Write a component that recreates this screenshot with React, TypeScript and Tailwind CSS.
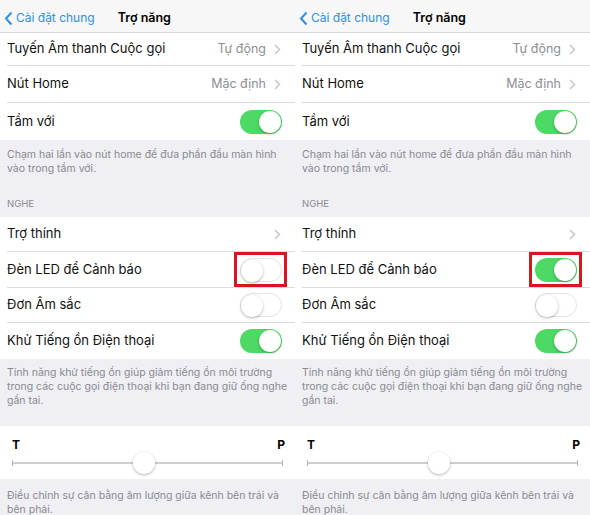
const font = { fontFamily: 'Inter, "Noto Sans", sans-serif' };

const Chevron = ({ className = "" }: { className?: string }) => (
  <svg width="7" height="11" viewBox="0 0 7 11" className={className}>
    <path d="M1 1l4.5 4.5L1 10" fill="none" stroke="#c7c7cc" strokeWidth="1.5" />
  </svg>
);

const Toggle = ({ on }: { on: boolean }) => (
  <div
    className={`relative w-[42px] h-[24px] rounded-full ${
      on ? "bg-[#4cd964]" : "bg-white border border-[#e3e3e6]"
    }`}
  >
    <div
      className={`absolute top-[1px] w-[22px] h-[22px] rounded-full bg-white shadow-[0_1px_3px_rgba(0,0,0,0.3)] ${
        on ? "right-[1px]" : "left-0 top-0"
      }`}
    />
  </div>
);

const Row = ({
  label,
  value,
  chevron,
  toggle,
  boxed,
  last,
  h = "h-[36px]",
}: {
  label: string;
  value?: string;
  chevron?: boolean;
  toggle?: boolean | undefined;
  boxed?: boolean;
  last?: boolean;
  h?: string;
}) => (
  <div className={`flex items-center pl-[7px] ${h}`}>
    <div
      className={`flex flex-1 items-center h-full pr-[14px] ${
        last ? "" : "border-b border-[#dcdce0]"
      }`}
    >
      <span className="flex-1 text-[13px] text-[#111]">{label}</span>
      {value && <span className="text-[12.5px] text-[#8e8e93] mr-[8px]">{value}</span>}
      {chevron && <Chevron />}
      {toggle !== undefined && (
        <div
          className={`flex items-center justify-center w-[53px] h-[35px] -mr-[6px] ${
            boxed ? "border-[3px] border-[#d9161f]" : ""
          }`}
        >
          <Toggle on={toggle} />
        </div>
      )}
    </div>
  </div>
);

const Note = ({ children, className = "" }: { children: React.ReactNode; className?: string }) => (
  <p className={`px-[7px] text-[10.5px] leading-[14px] text-[#8a8a8f] whitespace-nowrap ${className}`}>
    {children}
  </p>
);

const Panel = ({ led }: { led: boolean }) => (
  <div className="w-[295px] shrink-0 bg-[#efeff4]" style={font}>
    {/* nav */}
    <div className="h-[33px] flex items-center bg-[#f7f7f7] border-b border-[#d8d8dc] px-[4px] pt-[4px]">
      <svg width="9" height="15" viewBox="0 0 9 15" className="mr-[3px]">
        <path d="M7.5 1.5L2 7.5l5.5 6" fill="none" stroke="#2e8ee8" strokeWidth="2" />
      </svg>
      <span className="text-[12px] text-[#2e8ee8]">Cài đặt chung</span>
      <span className="ml-[23px] text-[12.5px] font-semibold text-black">Trợ năng</span>
    </div>

    <div className="bg-white">
      <Row label="Tuyến Âm thanh Cuộc gọi" value="Tự động" chevron h="h-[33px]" />
      <Row label="Nút Home" value="Mặc định" chevron h="h-[37px]" />
      <Row label="Tầm với" toggle={true} last h="h-[37px]" />
    </div>

    <Note className="pt-[8px]">
      Chạm hai lần vào nút home để đưa phần đầu màn hình
      <br />
      vào trong tầm với.
    </Note>
    <p className="px-[7px] pt-[21px] pb-[6px] text-[9.5px] leading-[14px] text-[#8a8a8f]">NGHE</p>

    <div className="bg-white">
      <Row label="Trợ thính" chevron h="h-[35px]" />
      <Row label="Đèn LED để Cảnh báo" toggle={led} boxed h="h-[36px]" />
      <Row label="Đơn Âm sắc" toggle={false} h="h-[35px]" />
      <Row label="Khử Tiếng ồn Điện thoại" toggle={true} last h="h-[36px]" />
    </div>

    <Note className="pt-[7px] pb-[18px]">
      Tính năng khử tiếng ồn giúp giảm tiếng ồn môi trường
      <br />
      trong các cuộc gọi điện thoại khi bạn đang giữ ống nghe
      <br />
      gần tai.
    </Note>

    <div className="bg-white h-[53px] px-[12px] pt-[12px]">
      <div className="flex justify-between text-[12px] font-bold text-black leading-[14px]">
        <span>T</span>
        <span className="-mr-[2px]">P</span>
      </div>
      <div className="relative h-[22px] flex items-center">
        <div className="flex-1 h-[2px] bg-[#cfcfd3]" />
        <div className="absolute left-0 top-[8px] w-[1px] h-[6px] bg-[#b5b5ba]" />
        <div className="absolute right-0 top-[8px] w-[1px] h-[6px] bg-[#b5b5ba]" />
        <div className="absolute left-[121px] top-0 w-[22px] h-[22px] rounded-full bg-white shadow-[0_1px_3px_rgba(0,0,0,0.3)]" />
      </div>
    </div>

    <Note className="pt-[10px] pb-[4px]">
      Điều chỉnh sự cân bằng âm lượng giữa kênh bên trái và
      <br />
      bên phải.
    </Note>
  </div>
);

export default function App() {
  return (
    <div className="w-[590px] h-[515px] overflow-hidden flex bg-white">
      <Panel led={false} />
      <Panel led={true} />
    </div>
  );
}
